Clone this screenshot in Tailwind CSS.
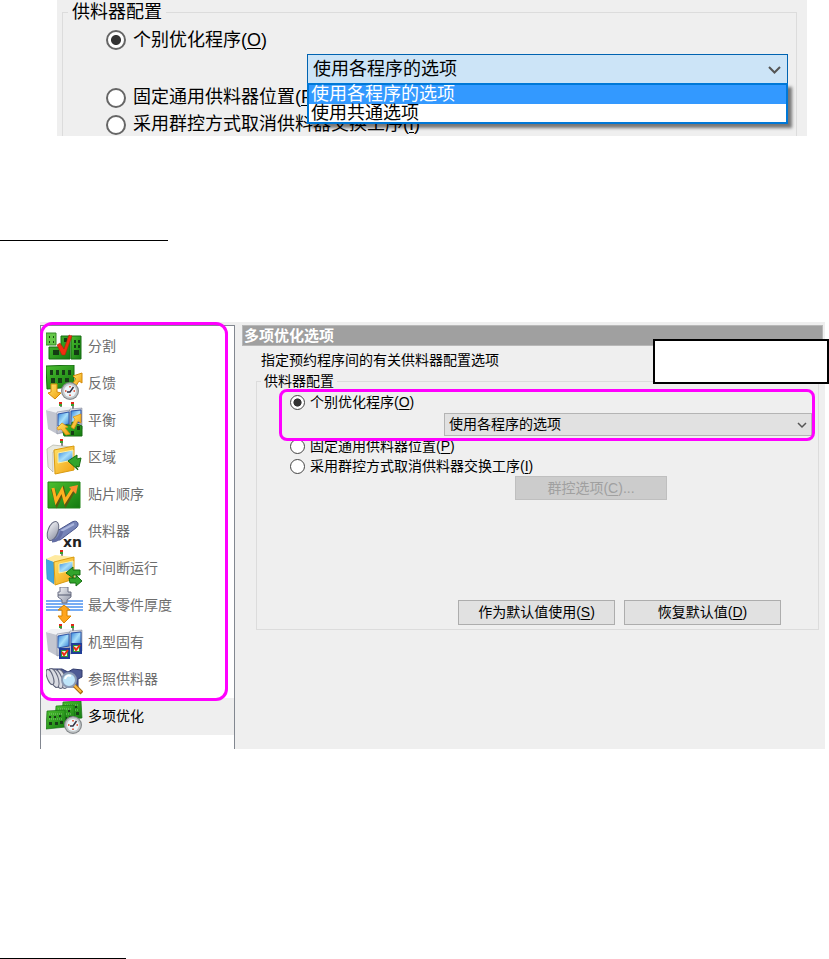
<!DOCTYPE html>
<html lang="zh-CN">
<head>
  <meta charset="UTF-8">
  <title>多项优化选项</title>
  <script src="https://cdn.jsdelivr.net/npm/@tailwindcss/browser@4"></script>
</head>
<body class="bg-white text-black font-['Liberation_Sans','Noto_Sans_CJK_SC',sans-serif]">

  <!-- Shared icon parts -->
  <svg class="absolute size-0">
    <defs>
      <linearGradient id="green" x1="0" y1="0" x2="1" y2="1"><stop offset="0" stop-color="#4cc030"/><stop offset="1" stop-color="#137a10"/></linearGradient>
      <linearGradient id="gold" x1="0" y1="0" x2="1" y2="1"><stop offset="0" stop-color="#ffe36a"/><stop offset="1" stop-color="#f0a010"/></linearGradient>
      <linearGradient id="glass" x1="0" y1="0" x2="1" y2="1"><stop offset="0" stop-color="#2f7fd8"/><stop offset=".5" stop-color="#a8e0fa"/><stop offset="1" stop-color="#2a78d0"/></linearGradient>
      <linearGradient id="steel" x1="0" y1="0" x2="1" y2="1"><stop offset="0" stop-color="#f4f5f8"/><stop offset="1" stop-color="#8e93a4"/></linearGradient>
      <g id="clock">
        <circle r="9" fill="#85898c"/><circle r="7.8" fill="#c4c8ca"/><circle r="6" fill="#eef6fb"/>
        <path d="M0-5v1.500M0 5V3.500" stroke="#e04020" stroke-width="1.500"/><path d="M-5 0h1.500M5 0H3.500" stroke="#e04020" stroke-width="1.500"/>
        <path d="M3.500-4 0 1-3 1" fill="none" stroke="#334" stroke-width="1.500"/>
      </g>
      <g id="tower"><path d="M0 0h3v2H0z" fill="#e02818"/><path d="M0 2h3v2H0z" fill="#38a030"/><path d="M1 4h2v4H1z" fill="#888"/></g>
      <g id="machines">
        <use href="#tower" x="13"/><use href="#tower" x="25"/>
        <path d="M0 8 11 10v22L2 27z" fill="#c3c6d0"/><path d="M0 8 5 5l20 0v5L11 11z" fill="#f1f2f5"/>
        <path d="M11 10 24 8v21l-13 3z" fill="url(#steel)" stroke="#777d92" stroke-width=".5"/>
        <path d="M24 7 36 6v21l-12 3z" fill="url(#steel)" stroke="#777d92" stroke-width=".5"/>
        <path d="M12 12 23 10v12l-11 2z" fill="url(#glass)" stroke="#3156a8"/>
        <path d="M25 9 35 8v12l-10 2z" fill="url(#glass)" stroke="#3156a8"/>
      </g>
      <g id="board">
        <path d="M2 1 20 0l1 17L1 19z" fill="url(#green)" stroke="#167014" stroke-width=".7"/>
        <path d="M4 6h2v2H4zM9 6h2v2H9zM14 5h2v2h-2zM4 12h3v3H4zM10 12h3v3h-3zM15 11h3v3h-3z" fill="#173d17"/>
        <path d="M4 9h14M4 4h14" stroke="#a5d99a" stroke-width=".7" stroke-dasharray="1 1"/>
      </g>
    </defs>
  </svg>

  <!-- Feeder setup, drop-down open -->
  <section class="ml-[57px] mr-[22px] h-34 overflow-hidden bg-[#efefef] pl-[5px] pr-[10px] text-[18px]">
    <fieldset class="border border-b-0 border-[#dcdcdc]">
      <legend class="ml-[5px] px-1 leading-6">供料器配置</legend>
      <label class="mt-[2px] flex h-7 items-center gap-[7px] pl-[43px]">
        <input type="radio" name="setup-open" checked class="size-5 shrink-0 appearance-none rounded-full border-2 border-[#666] bg-white bg-radial from-[#333] from-40% to-white to-48%">
        <span>个别优化程序(<u class="underline underline-offset-2">O</u>)</span>
      </label>
      <div class="relative z-10 ml-[244px] mr-[8px]">
        <select aria-label="程序选项" class="block h-[30px] w-full appearance-none border border-[#0063b1] bg-[#cce4f7] pl-[5px] leading-7">
          <option>使用各程序的选项</option>
          <option>使用共通选项</option>
        </select>
        <svg class="pointer-events-none absolute right-[7px] top-[12px] h-[8px] w-[13px]" viewBox="0 0 13 8" fill="none" stroke="#555" stroke-width="2"><path d="m1 1 5.500 5.500L12 1"/></svg>
        <ul role="listbox" class="absolute inset-x-0 top-[29px] border-2 border-[#0078d7] bg-white shadow-[4px_4px_3px_rgba(0,0,0,0.5)]">
          <li role="option" aria-selected="true" class="bg-[#3399ff] pl-[2px] leading-[19px] text-white">使用各程序的选项</li>
          <li role="option" class="pl-[2px] leading-[18px]">使用共通选项</li>
        </ul>
      </div>
      <label class="flex h-[27px] items-center gap-[7px] pl-[43px]">
        <input type="radio" name="setup-open" class="size-5 shrink-0 appearance-none rounded-full border-2 border-[#666] bg-white">
        <span class="whitespace-nowrap">固定通用供料器位置(<u class="underline underline-offset-2">P</u>)</span>
      </label>
      <label class="flex h-[27px] items-center gap-[7px] pl-[43px]">
        <input type="radio" name="setup-open" class="size-5 shrink-0 appearance-none rounded-full border-2 border-[#666] bg-white">
        <span class="whitespace-nowrap">采用群控方式取消供料器交换工序(<u class="underline underline-offset-2">I</u>)</span>
      </label>
    </fieldset>
  </section>

  <hr class="mt-[104px] w-[168px] border-t border-black">

  <!-- Options window -->
  <section class="relative ml-10 mr-1 mt-[81px] flex bg-[#efefef] pt-[3px] text-[14px]">
    <nav class="w-[195px] shrink-0 border border-b-0 border-[#828790] bg-white pb-[14px] pt-[2px] text-[#6d6d6d]">
      <a href="#" class="flex h-[37px] items-center gap-[5px] pl-[5px]">
        <svg class="size-[37px]" viewBox="0 0 37 37">
          <path d="M0 5h10v12H0z" fill="#66c849" stroke="#348a28"/><path d="M3 8h1v2H3zM7 8h1v2H7zM3 13h1v2H3zM7 13h1v2H7z" fill="#174d12"/>
          <path d="M3 19h12V8h9v23H3z" fill="url(#green)" stroke="#176d12"/><path d="M25 8h10v23H25z" fill="url(#green)" stroke="#176d12"/>
          <path d="M7 22h6v5H7zM28 22h5v5h-5zM28 12h2v3h-2zM32 12h2v3h-2zM28 17h2v3h-2zM32 17h2v3h-2zM18 10h3v4h-3z" fill="#133c13"/>
          <path d="m11 17 3-2 4 6 5-14 3 1-7 19h-3z" fill="#f03010" stroke="#b51b08" stroke-width=".5"/>
        </svg>分割
      </a>
      <a href="#" class="flex h-[37px] items-center gap-[5px] pl-[5px]">
        <svg class="size-[37px]" viewBox="0 0 37 37">
          <path d="M0 1 28 0v22L1 24z" fill="url(#green)" stroke="#176d12"/>
          <path d="M4 5h3v5H4zM10 5h3v5h-3zM16 5h3v5h-3zM22 5h3v5h-3zM5 13h4v5H5zM12 13h4v5h-4zM19 13h4v4h-4z" fill="#173d17"/>
          <path d="M5 19h6v8l4 1-6 6-7-6 3-1z" fill="url(#gold)" stroke="#d58a08"/><path d="m27 11 9-3v10l-3-2-3 5-3-3 3-4z" fill="url(#gold)" stroke="#d58a08"/>
          <use href="#clock" x="24" y="26"/>
        </svg>反馈
      </a>
      <a href="#" class="flex h-[37px] items-center gap-[5px] pl-[5px]">
        <svg class="size-[37px]" viewBox="0 0 37 37">
          <use href="#machines"/>
          <path d="m17 30 3-7h6v-3l10 4v10H18z" fill="url(#green)" stroke="#176d12"/><path d="M25 29h3v4h-3zM31 24h3v4h-3z" fill="#173d17"/>
          <path d="m11 26 5-5 6 4-3 1 5 6-4 1-5-6-3 1z" fill="url(#gold)" stroke="#e08c08" stroke-width=".7"/><path d="m27 15 8-3v9l-3-2-4 8-3-2 4-8z" fill="url(#gold)" stroke="#e08c08" stroke-width=".7"/>
        </svg>平衡
      </a>
      <a href="#" class="flex h-[37px] items-center gap-[5px] pl-[5px]">
        <svg class="size-[37px]" viewBox="0 0 37 37">
          <use href="#tower" x="14"/><path d="m1 10 6-4 19 2-19 5v20l-5-5z" fill="#e8e9df" stroke="#a5a69b" stroke-width=".6"/>
          <path d="m8 11 20-4v24L9 35z" fill="url(#gold)" stroke="#d99b10"/><path d="m12 14 15-3v10l-15 3z" fill="url(#glass)" stroke="#fff0a0"/>
          <path d="m22 22 9-6v4l4-1-2 9-3-1 2 4z" fill="#32a52c" stroke="#176d12"/>
        </svg>区域
      </a>
      <a href="#" class="flex h-[37px] items-center gap-[5px] pl-[5px]">
        <svg class="size-[37px]" viewBox="0 0 37 37">
          <path d="M2 6h32v26H2z" fill="url(#green)" stroke="#228519"/>
          <path d="m7 13 4 14 6-12 3 12 9-15" fill="none" stroke="#5e5a10" stroke-width="4"/><path d="m7 12 3 13 6-11 3 11 9-14" fill="none" stroke="#ffb020" stroke-width="3"/>
          <path d="m23 11 9-2-2 9z" fill="#ff8d30"/>
        </svg>贴片顺序
      </a>
      <a href="#" class="flex h-[37px] items-center gap-[5px] pl-[5px]">
        <svg class="size-[37px]" viewBox="0 0 37 37">
          <path d="m11 18 15-9c6-3 8 3 4 6L14 27H6z" fill="#7785b8" stroke="#4b568c"/><path d="m15 18 13-7" stroke="#aab5dc" stroke-width="2"/>
          <ellipse cx="7" cy="18" rx="5" ry="10" transform="rotate(20 7 18)" fill="url(#steel)" stroke="#666b80"/><path d="M6 28c6 0 8-4 10-10" fill="none" stroke="#626da3" stroke-width="3"/>
          <text x="17" y="34" font-family="DejaVu Sans" font-size="14" font-weight="bold" fill="#222">xn</text>
        </svg>供料器
      </a>
      <a href="#" class="flex h-[37px] items-center gap-[5px] pl-[5px]">
        <svg class="size-[37px]" viewBox="0 0 37 37">
          <use href="#tower" x="14"/><path d="m0 9 8 3v22l-7-5z" fill="#43a6dc" stroke="#2880b8" stroke-width=".5"/><path d="m0 9 9-4 19 2-20 5z" fill="#ffeaa0"/>
          <path d="m8 12 20-5v22L9 35z" fill="url(#gold)" stroke="#d99b10"/><path d="m13 14 14-3v9l-14 3z" fill="url(#glass)" stroke="#fff0a0"/>
          <path d="m20 23 7-6v3h7v5h-7v3zM36 31l-6 5v-3h-6l-1-5h7v-3z" fill="#32a52c" stroke="#176d12"/>
        </svg>不间断运行
      </a>
      <a href="#" class="flex h-[37px] items-center gap-[5px] pl-[5px]">
        <svg class="size-[37px]" viewBox="0 0 37 37">
          <path d="M0 14h37M0 17h37M0 20h37M0 23h37" stroke="#4c91ef" stroke-width="1.500"/>
          <path d="M14 0h8v5h3v5l-4 3v3h-5v-3l-4-3V5h2z" fill="url(#steel)" stroke="#6c7085"/><path d="M12 8h13" stroke="#555b70"/>
          <path d="m18 18 6 5h-3v6h4l-7 7-6-7h4v-6h-4z" fill="#ffa51d" stroke="#d88400"/>
        </svg>最大零件厚度
      </a>
      <a href="#" class="flex h-[37px] items-center gap-[5px] pl-[5px]">
        <svg class="size-[37px]" viewBox="0 0 37 37">
          <use href="#machines"/>
          <path d="M14 25h9v9h-9zM26 20h9v9h-9z" fill="#2d9b36" stroke="#213d98" stroke-width="2"/><path d="M16 27h5v5h-5zM28 22h5v5h-5z" fill="#e8f4e4"/>
          <path d="m16 28 2 3 4-5M28 23l2 3 4-5" fill="none" stroke="#ee2b14" stroke-width="2"/>
        </svg>机型固有
      </a>
      <a href="#" class="flex h-[37px] items-center gap-[5px] pl-[5px]">
        <svg class="size-[37px]" viewBox="0 0 37 37">
          <path d="M3 8h13l6 3 5-3 9 1v7l-4 2v8H9z" fill="#4e5b94" stroke="#303a6c"/>
          <g fill="#d9dbe2" stroke="#60657a"><ellipse cx="16" cy="18" rx="4" ry="10" transform="rotate(-20 16 18)"/><ellipse cx="12" cy="18" rx="4" ry="10" transform="rotate(-20 12 18)"/><ellipse cx="8" cy="17" rx="4" ry="10" transform="rotate(-20 8 17)"/><ellipse cx="4" cy="16" rx="3" ry="8" transform="rotate(-20 4 16)"/></g>
          <path d="m28 24 8 8" stroke="#a56b10" stroke-width="4"/><path d="m28 24 7 7" stroke="#ffbd42" stroke-width="2"/>
          <circle cx="23" cy="19" r="7" fill="#bfe6fa" stroke="#8b9bb4" stroke-width="2"/><path d="M19 18c1-4 4-4 6-3" fill="none" stroke="#fff" stroke-width="2"/>
        </svg>参照供料器
      </a>
      <a href="#" class="flex h-[37px] items-center gap-[5px] bg-[#efefef] pl-[5px] text-black">
        <svg class="size-[37px]" viewBox="0 0 37 37">
          <use href="#board" x="15" y="3"/><use href="#board" x="8" y="7"/><use href="#board" x="-1" y="12"/>
          <use href="#clock" x="27" y="27"/>
        </svg>多项优化
      </a>
    </nav>

    <main class="ml-[7px] mr-[2px] grow">
      <h1 class="h-[21px] border border-[#b8b8b8] bg-[#a0a0a0] pl-px text-[15px] font-bold leading-5 text-white">多项优化选项</h1>
      <p class="pl-[19px] pt-1 leading-[21px]">指定预约程序间的有关供料器配置选项</p>

      <fieldset class="ml-[14px] mr-1 border border-[#dcdcdc] pb-1">
        <legend class="ml-[4px] px-[3px] leading-5">供料器配置</legend>
        <div class="relative">
          <label class="flex h-[22px] items-center gap-[5px] pl-[33px]">
            <input type="radio" name="setup" checked class="size-[15px] shrink-0 appearance-none rounded-full border border-[#444] bg-white bg-radial from-[#333] from-40% to-white to-48%">
            <span>个别优化程序(<u class="underline underline-offset-2">O</u>)</span>
          </label>
          <div class="relative ml-[187px] mr-[6px]">
            <select aria-label="程序选项" class="block h-[23px] w-full appearance-none border border-[#b4b4b4] bg-[#e1e1e1] pl-[4px] leading-[21px]">
              <option>使用各程序的选项</option>
              <option>使用共通选项</option>
            </select>
            <svg class="pointer-events-none absolute right-[5px] top-[9px] h-[7px] w-[10px]" viewBox="0 0 10 7" fill="none" stroke="#555" stroke-width="1.500"><path d="m1 1 4 4 4-4"/></svg>
          </div>
          <div class="pointer-events-none absolute -bottom-[5px] -top-[2px] left-[22px] right-[3px] rounded-lg border-3 border-[#ff00ff]"></div>
        </div>
        <label class="flex h-5 items-center gap-[5px] pl-[33px]">
          <input type="radio" name="setup" class="size-[15px] shrink-0 appearance-none rounded-full border border-[#444] bg-white">
          <span>固定通用供料器位置(<u class="underline underline-offset-2">P</u>)</span>
        </label>
        <label class="flex h-5 items-center gap-[5px] pl-[33px]">
          <input type="radio" name="setup" class="size-[15px] shrink-0 appearance-none rounded-full border border-[#444] bg-white">
          <span>采用群控方式取消供料器交换工序(<u class="underline underline-offset-2">I</u>)</span>
        </label>
        <div class="flex justify-end pr-[151px]">
          <button disabled class="h-6 w-[152px] border border-[#bfbfbf] bg-[#cccccc] text-[#a0a0a0]">群控选项(<u class="underline underline-offset-2">C</u>)...</button>
        </div>
        <div class="mt-[100px] flex justify-end gap-[9px] pr-[37px]">
          <button class="h-[25px] w-[157px] border border-[#adadad] bg-[#e1e1e1]">作为默认值使用(<u class="underline underline-offset-2">S</u>)</button>
          <button class="h-[25px] w-[157px] border border-[#adadad] bg-[#e1e1e1]">恢复默认值(<u class="underline underline-offset-2">D</u>)</button>
        </div>
      </fieldset>
    </main>

    <!-- Callouts over the window -->
    <div class="pointer-events-none absolute left-0 top-0 h-[379px] w-[188px] rounded-xl border-3 border-[#ff00ff]"></div>
    <div class="absolute -right-1 top-[17px] h-[45px] w-[176px] border-2 border-black bg-white"></div>
  </section>

  <hr class="mt-[209px] w-[126px] border-t border-black">
</body>
</html>
